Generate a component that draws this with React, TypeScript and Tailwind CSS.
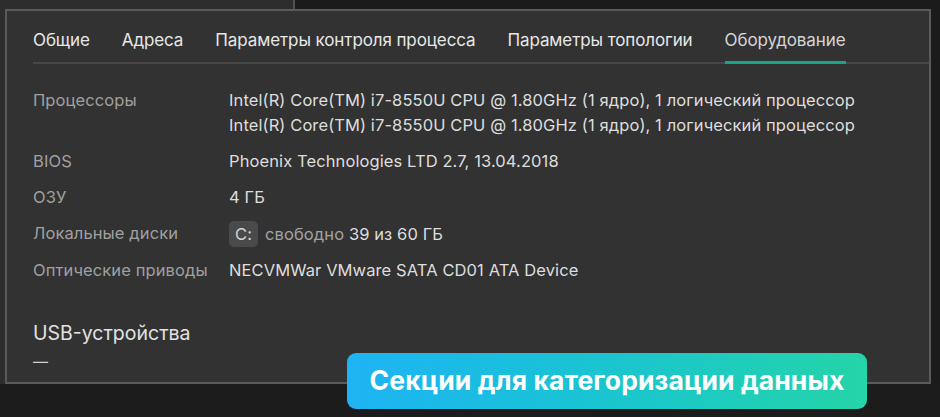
import React from 'react';

type Row = {
  label: string;
  values: React.ReactNode[];
};

const tabs = [
  'Общие',
  'Адреса',
  'Параметры контроля процесса',
  'Параметры топологии',
  'Оборудование',
];

const cpu = 'Intel(R) Core(TM) i7-8550U CPU @ 1.80GHz (1 ядро), 1 логический процессор';

const rows: Row[] = [
  { label: 'Процессоры', values: [cpu, cpu] },
  { label: 'BIOS', values: ['Phoenix Technologies LTD 2.7, 13.04.2018'] },
  { label: 'ОЗУ', values: ['4 ГБ'] },
  {
    label: 'Локальные диски',
    values: [
      <span className="flex items-center gap-[7px]">
        <span className="flex h-[26px] items-center rounded-[5px] bg-[#4a4a4a] px-[6px] text-[#d4d4d4]">C:</span>
        <span>
          <span className="text-[#a3a3a3]">свободно</span> 39 из 60 ГБ
        </span>
      </span>,
    ],
  },
  { label: 'Оптические приводы', values: ['NECVMWar VMware SATA CD01 ATA Device'] },
];

const App = () => {
  return (
    <div
      className="relative h-[417px] w-[940px] overflow-hidden bg-[#1c1c1c]"
      style={{ fontFamily: 'Inter, "Noto Sans", sans-serif' }}
    >
      {/* Background windows */}
      <div className="flex h-[384px]">
        <div className="w-[295px] border-r-2 border-[#525252] bg-[#2d2d2d]"></div>
        <div className="flex-1 bg-[#1b1b1b]"></div>
      </div>

      {/* Device details window */}
      <div className="absolute left-[5px] top-[9px] flex h-[375px] w-[926px] flex-col border-2 border-[#5a5a5a] bg-[#323232]">
        <div className="ml-[26px] mt-[17px] flex gap-8 border-b-2 border-[#474747]">
          {tabs.map((tab, i) => (
            <div
              key={tab}
              className={`-mb-[2px] pb-[9px] text-[17px] leading-[24px] tracking-[-0.1px] ${
                i === tabs.length - 1 ? 'border-b-[3px] border-[#17a587] text-[#d6d6d6]' : 'border-b-[3px] border-transparent text-[#e8e8e8]'
              }`}
            >
              {tab}
            </div>
          ))}
        </div>

        <div className="ml-[26px] mt-[24px] flex flex-col gap-[11px] text-[16.5px] leading-[25px] tracking-[0.1px]">
          {rows.map((row) => (
            <div key={row.label} className="flex">
              <div className="w-[196px] shrink-0 text-[#a0a0a0]">{row.label}</div>
              <div className="flex flex-col text-[#dedede]">
                {row.values.map((v, i) => (
                  <div key={i}>{v}</div>
                ))}
              </div>
            </div>
          ))}
        </div>

        <div className="ml-[26px] mt-[37px] text-[19.5px] leading-[26px] text-[#e2e2e2]">USB-устройства</div>
        <div className="ml-[26px] mt-[4px] text-[15px] leading-[24px] text-[#cfcfcf]">—</div>
      </div>

      {/* Callout */}
      <div className="absolute left-[347px] top-[353px] flex h-[56px] w-[520px] items-center justify-center rounded-[9px] bg-linear-to-r from-[#1fb3f4] to-[#25d4a7]">
        <span className="text-[26.5px] font-bold tracking-[0.1px] text-white">Секции для категоризации данных</span>
      </div>
    </div>
  );
};

export default App;
